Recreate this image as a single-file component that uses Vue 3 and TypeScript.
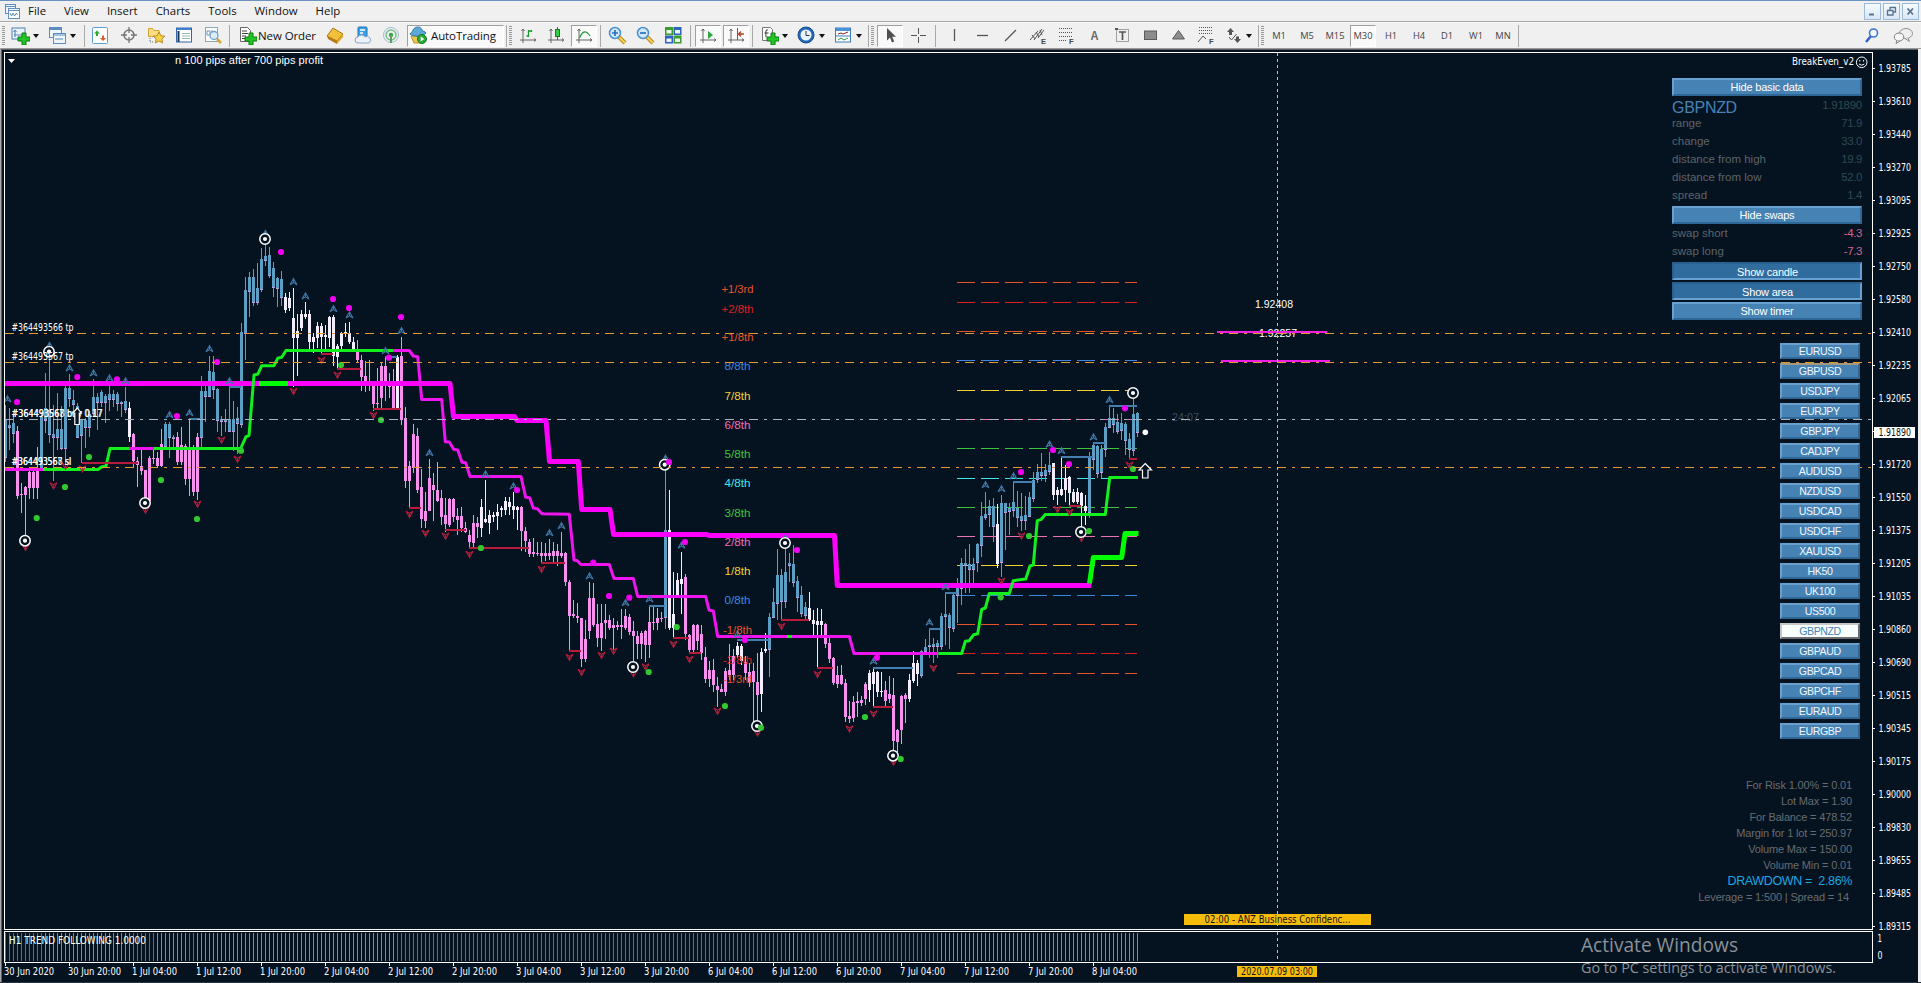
<script setup lang="ts">
interface Candle { x: number; high: number; top: number; bottom: number; low: number; tone: string }
type Pt = [number, number]

const FIRST_BAR = 5
const BAR_STEP = 4

/* Bars are stored as high,bodyTop,bodyBottom,low in thirds of a pixel below `base`; a letter switches the tone. */
const segments: { base: number; start: number; rows: string }[] = [
  { base: 220, start: 0, rows: `b 555,600,712,725 565,615,622,690 590,610,638,668 p 618,632,828,838 788,821,824,880 797,800,825,945
745,755,803,838 745,755,803,838 680,750,803,838 b 575,590,745,750 460,565,600,640 410,570,643,670 555,643,652,783 518,627,652,690
558,627,683,690 495,503,683,735 462,503,535,560 510,540,553,580 548,557,650,652 597,600,645,730 595,600,620,683 573,583,620,650
477,530,580,592 518,530,545,630 510,517,545,560 522,527,545,610 490,522,538,572 510,522,538,560 517,522,548,572 543,545,548,592
502,543,567,580 w 547,565,650,665 p 638,642,722,740 710,722,735,800 683,738,752,765 750,750,838,840 708,715,843,845 685,713,716,733
697,715,737,745 627,673,738,740 b 607,612,677,683 605,612,650,715 645,652,655,683 p 637,652,725,735 620,675,725,735 673,678,778,795
600,680,778,828 675,683,817,828 640,650,817,840 b 467,513,650,685 490,513,527,607 407,453,527,530 407,455,507,537 503,508,600,635
587,597,602,648 568,597,602,635 490,598,632,632 543,597,632,693 560,595,608,703 310,337,612,625 170,210,340,420 155,170,213,290
147,170,245,258 128,205,247,255 85,117,207,215 75,107,119,138 80,105,165,175 127,145,200,230 170,175,203,260 153,177,230,258
w 220,230,270,278 215,235,265,272 205,295,353,500 283,333,353,468 270,283,325,333 245,283,290,298 270,283,367,395 340,350,367,400
305,318,355,383 310,318,350,400 315,345,350,390 287,290,353,380 285,290,408,437 373,378,410,450 335,340,378,397 308,335,340,350
305,340,367,372 350,367,388,395 p 360,388,420,430 405,420,470,513 422,468,487,515 420,485,492,512 483,492,553,573 445,550,553,563
428,437,535,565 415,437,490,543 460,487,500,535 447,497,563,565 w 405,410,563,567 p 350,408,600,615` },
  { base: 260, start: 100, rows: `p 440,473,663,685 603,618,663,748 492,522,625,640 505,528,690,700 628,680,778,805 697,752,782,805
597,653,752,753 640,675,690,783 607,690,723,725 690,715,770,795 715,765,793,815 715,717,795,800 715,717,770,785 743,768,780,825
740,768,805,815 785,803,817,820 810,825,847,868 765,790,850,862 770,788,800,835 w 717,740,805,830 660,778,785,788 750,765,788,823
755,765,770,785 733,755,768,810 738,745,750,770 712,723,750,765 712,727,740,765 695,738,750,778 738,742,750,810 p 738,742,812,873
800,812,843,875 837,845,883,890 833,877,883,890 845,878,883,888 847,878,887,913 850,878,887,903 837,878,887,900 845,873,887,905
853,873,887,918 817,880,887,893 875,880,967,978` },
  { base: 440, start: 141, rows: `p 420,427,527,632 480,522,527,535 490,527,533,550 533,533,657,680 540,597,657,665 427,473,572,597
430,475,555,560 493,552,593,622 493,550,595,632 493,540,550,597 525,540,563,570 535,555,563,630 543,555,560,570 507,555,560,597
507,527,563,570 523,530,575,585 543,573,588,663 573,588,612,657 573,580,612,657 570,573,615,665 502,545,615,655 502,545,550,570
505,533,550,570 515,533,537,545 b 90,270,530,567 w 150,270,563,570 397,522,563,595 400,420,467,475 337,417,433,522
p 403,412,583,600 583,585,630,640 552,555,630,640 553,555,603,630 555,583,640,660 620,650,717,730 662,690,717,740 657,690,735,755
712,737,750,800 733,748,755,755 683,693,755,767 612,690,705,720 627,648,705,720 w 605,618,645,655 612,618,663,675
p 648,665,700,720 670,695,725,740 670,693,725,848 640,725,765,840 w 625,635,762,815 578,627,632,640 b 520,530,628,710 443,487,530,535
327,405,490,540 387,405,483,540 325,395,483,505 340,370,375,425 315,373,425,440 407,423,472,515 437,465,520,530 485,500,525,540
w 455,503,540,543 510,540,553,590 505,543,555,683 508,543,555,587 p 548,552,612,625 587,610,657,670 650,655,730,735 677,705,733,745
675,705,732,735 717,730,832,847 783,827,838,850 767,785,835,845 755,783,788,830 767,780,788,797 725,732,777,795
w 690,698,750,787 687,695,733,800 693,695,755,770 697,752,755,770 p 723,750,782,800 707,763,778,790 713,765,903,935 868,870,907,935
765,767,870,912 760,765,777,850 w 703,720,777,785 632,670,723,730 660,670,703,737 b 630,633,705,713 597,620,632,640 570,614,617,655
595,613,617,668 600,610,617,655 520,528,617,630 460,522,527,615 518,525,560,627 460,465,563,575 415,440,465,550 353,368,443,495
327,370,375,460 313,373,387,460 355,373,388,433 310,312,367,395 187,228,315,350 155,223,230,240 180,198,222,262 173,198,257,307
w 193,253,373,383 b 165,188,367,410 188,190,215,330 188,205,213,285 127,185,210,232 153,205,230,262 158,228,240,272 167,225,240,270
155,170,227,230 97,120,173,185 73,97,117,130 40,97,105,122 73,90,105,125 35,75,92,105 w 68,70,165,180 140,150,165,195 50,148,165,167
75,113,150,187 108,112,158,197 148,155,187,190 143,155,187,193 155,160,197,260 165,197,213,255 b 37,50,215,235` },
  { base: 260, start: 272, rows: `b 547,555,597,630 555,557,640,655 555,567,637,653 490,500,567,590 440,473,500,503 445,475,492,520
463,487,513,523 460,490,510,540 487,492,540,585 520,537,567,600 415,462,570,587 457,460,517,530` },
]

const toneColor: Record<string, string> = { b: '#5c9fc4', p: '#f890f0', w: '#f2eefc' }

const candles: Candle[] = segments.flatMap(({ base, start, rows }) => {
  const out: Candle[] = []
  let tone = 'b'
  for (const cell of rows.split(/\s+/)) {
    if (cell.length === 1) { tone = cell; continue }
    const [high, top, bottom, low] = cell.split(',').map(v => Math.round(base + Number(v) / 3))
    out.push({ x: FIRST_BAR + BAR_STEP * (start + out.length), high, top, bottom: Math.max(bottom, top + 1), low, tone })
  }
  return out
})

const slowLine = [
  { color: '#ff00ff', pts: '5,383.5 450,383.5 453.5,416.5 514.5,416.5 517,420.5 546,420.5 549.5,461.5 578.3,461.5 581.7,509.5 610,509.5 613.5,534.5 707,534.5 709,535.5 834.5,535.5 837.3,585.5 1091,585.5' },
  { color: '#00ff00', pts: '259,383.5 288,383.5' },
  { color: '#00ff00', pts: '1089.5,583.5 1093.3,557.5 1121.7,557.5 1125,533.5 1138.5,533.5' },
]
const fastLine = [
  { color: '#f014f0', pts: '5,469.5 43,469.5' },
  { color: '#14f01e', pts: '43,469.5 98,469.5 101.5,467 106,466 110,448.5 240.7,448.5 246,436.7 249,435.7 254,375 258,374 261.7,365.7 274,365.7 277.7,358.3 281.7,357.3 286,350.5 393,350.5' },
  { color: '#f014f0', pts: '129,448.5 154,448.5' },
  { color: '#f014f0', pts: '393,350.5 409.3,350.5 413.3,356 417.7,356.7 421.7,399.5 441.7,399.5 445.3,441.7 449.3,442 453.7,449.3 457.7,450 462,462.3 465.7,462.7 470,476.5 521,476.5 525.7,497.3 529.7,497.7 533.3,508 537.3,508.7 542,513.7 569.3,514.3 574,560 577.3,560.7 581,564.5 609.3,564.5 614,578.5 633.3,578.5 637.7,596.5 705.7,596.5 709,610 713.3,611 717.7,636.5 849.3,636.5 854,653.5 938.3,653.5' },
  { color: '#14f01e', pts: '787,636.5 792,636.5' },
  { color: '#14f01e', pts: '938.3,653.5 961.7,653.5 965.3,641.3 969.3,640.7 973.7,634.7 977.7,633.7 981.7,609.3 985.3,608 989.3,593.5 1009.3,593.5 1013.3,580.7 1025.7,579 1030,566 1033.3,565 1037.3,520.7 1041.3,519.3 1045.3,514.5 1105.3,514.5 1109.7,477.5 1138,477.5' },
]

const pts = (s: string): Pt[] => s.split(' ').map(p => p.split(',').map(Number) as Pt)

const rings = pts('49,351.7 25,540.7 145,503 265,239 664.7,464.7 785,543 633,667 757,726 893,755.7 1133,393 1081,532')
const magentaDots = pts('17,402 77.3,377 117,379.3 217,362 177,416 281,252 333,299 349,308 401,317 389,357.7 517,490 593.3,562.7 669,462 685,542 609,596 629.3,597.7 797,550 745,640 877,657.7 1021,472 1053,450 1069,464 1125,408.3')
const greenDots = pts('36.7,518 65,487 89,457 161,480 197,519 241,450.7 341,365 381,420 481,548 676.7,627 648.7,672 725,706 761,727.7 865,717 900.7,759 1029,536 1089,531 1133,469 1000.7,597.3')
const upFractals = pts('7,399 49,345.5 69,368 93,373 109,378 125,381 169,414.7 189,412.7 209,348.7 229,381 265,233.5 293,281.7 305,296 333,308.7 349,315 401,330.7 385,350.7 429,452.7 485,474 513,486 549,532.7 561,525.7 589,576 649,599 665,458.3 681,545.3 785,537.7 625,602.7 737,634 873,661.3 929,622.3 945,586.7 985,484.7 1001,488.7 1013,476 1049,444.3 1061,450.7 1093,437 1109,399.7')
const downFractals = pts('65,466 82,468.7 53,485.7 25,547.3 145,510 197,504 221,440 237,459 293,391.3 321,360.3 337,375 373,415.3 409,514.3 425,533.3 445,536 469,554.3 541,569.3 569,657.3 581,672.3 601,655.3 613,651 633,673.7 645,666.7 673,644.3 689,659.3 717,711 757,732.7 781,626.3 817,674.3 849,728.7 873,713.7 893,762 933,668.3 1021,535.7 1001,581 1057,509.3 1069,512.3 1081,538.3 1129,465')

const levels = (s: string) => s.split(' ').map(r => { const [x1, x2, y] = r.split(',').map(Number); return { x1, x2, y } })
const supports = levels('82,138,463 321,333,354 337,361,369 373,401,409 409,421,508 445,466,530 469,529,548 541,565,563 569,581,651 673,689,638 689,701,653 781,809,620 817,833,668 873,893,707 1069,1081,506 1129,1137,459')
const resistances = levels('189,201,419 229,241,387 385,397,357 737,769,640 649,665,606 873,913,668 929,941,629 945,957,593 1061,1093,457 1013,1033,482 1093,1105,443 1109,1137,406')

const murrey = [
  { t: '+1/3rd', c: '#e8542a', y: 282, ty: 289.3 }, { t: '+2/8th', c: '#e01f1f', y: 302, ty: 309.3 },
  { t: '+1/8th', c: '#e8542a', y: 331, ty: 338 }, { t: '8/8th', c: '#3a86e0', y: 360, ty: 367 },
  { t: '7/8th', c: '#f0d232', y: 390, ty: 396.3 }, { t: '6/8th', c: '#ee6fb4', y: 419, ty: 426 },
  { t: '5/8th', c: '#3cc43c', y: 448, ty: 455 }, { t: '4/8th', c: '#3ce8ec', y: 478, ty: 484 },
  { t: '3/8th', c: '#3cc43c', y: 507, ty: 514 }, { t: '2/8th', c: '#ee6fb4', y: 536, ty: 543 },
  { t: '1/8th', c: '#f0d232', y: 565, ty: 572 }, { t: '0/8th', c: '#3a86e0', y: 595, ty: 601 },
  { t: '-1/8th', c: '#e8542a', y: 624, ty: 631 }, { t: '-2/8th', c: '#e01f1f', y: 653, ty: 660.3 },
  { t: '-1/3rd', c: '#e8542a', y: 673, ty: 679.3 },
]

const orders = [
  { y: 333, c: '#e39a34' }, { y: 362, c: '#e39a34' }, { y: 419, c: '#a9b4bd' }, { y: 467, c: '#e39a34' },
]
const orderLabels = [
  { y: 327.7, t: '#364493566 tp', w: 62 }, { y: 356.7, t: '#364493567 tp', w: 62 },
  { y: 413.7, t: '#364493567 buy 0.17', w: 90.5 }, { y: 413.7, t: '#364493568 buy 0.17', w: 91.5 },
  { y: 461.3, t: '#364493567 sl', w: 59.5 }, { y: 461.3, t: '#364493568 sl', w: 60 },
]

const prices = ['1.93785', '1.93610', '1.93440', '1.93270', '1.93095', '1.92925', '1.92750', '1.92580', '1.92410', '1.92235', '1.92065', '1.91890', '1.91720', '1.91550', '1.91375', '1.91205', '1.91035', '1.90860', '1.90690', '1.90515', '1.90345', '1.90175', '1.90000', '1.89830', '1.89655', '1.89485', '1.89315']
const priceY = (i: number) => 68 + 33 * i

const times = ['30 Jun 2020', '30 Jun 20:00', ...['1', '2', '3', '6', '7', '8'].flatMap(d => ['04:00', '12:00', '20:00'].map(h => `${d} Jul ${h}`))].slice(0, 18)

const downRanges = [[0, 9], [32, 37], [46, 47], [98, 195], [198, 233]]
const trend = Array.from({ length: 284 }, (_, i) => ({
  x: FIRST_BAR + BAR_STEP * i,
  c: downRanges.some(([a, b]) => i >= a && i <= b) ? '#c828cc' : '#2cc83c',
}))

const basic = [['range', '71.9'], ['change', '33.0'], ['distance from high', '19.9'], ['distance from low', '52.0'], ['spread', '1.4']]
const swaps = [['swap short', '-4.3'], ['swap long', '-7.3']]
const symbols = ['EURUSD', 'GBPUSD', 'USDJPY', 'EURJPY', 'GBPJPY', 'CADJPY', 'AUDUSD', 'NZDUSD', 'USDCAD', 'USDCHF', 'XAUUSD', 'HK50', 'UK100', 'US500', 'GBPNZD', 'GBPAUD', 'GBPCAD', 'GBPCHF', 'EURAUD', 'EURGBP']
const account = ['For Risk 1.00% = 0.01', 'Lot Max = 1.90', 'For Balance = 478.52', 'Margin for 1 lot = 250.97', 'Volume Max = 150.00', 'Volume Min = 0.01']

const menu = ['File', 'View', 'Insert', 'Charts', 'Tools', 'Window', 'Help']

const axes = '<path d="M4 3v14M1 14h16M2.500 5L4 3l1.500 2M15 12.500L17 14l-2 1.500" fill="none" stroke="#666"/>'
const plus = '<path d="M11 7h4v4h4v4h-4v4h-4v-4H7v-4h4z" fill="#25c425" stroke="#0c7a12"/>'
const lens = '<path d="M11 11l6 6" stroke="#b98a1c" stroke-width="4"/><path d="M11 11l6 6" stroke="#f3d35c" stroke-width="2"/><circle cx="7" cy="7" r="5.500" fill="#cfe9fb" stroke="#4a8fcf" stroke-width="1.500"/>'
const icons: Record<string, string> = {
  newchart: '<rect x="1" y="2" width="13" height="11" fill="#eaf3fb" stroke="#4b82b5"/><path d="M4 4v7M2.500 6L4 4l1.500 2M3 9h8" stroke="#4b82b5" fill="none"/>' + plus,
  profiles: '<rect x="1.500" y="1.500" width="12" height="10" fill="#eef5fb" stroke="#5a8dbd"/><path d="M1.500 3h12" stroke="#5a8dbd" stroke-width="2"/><rect x="5.500" y="7.500" width="12" height="10" fill="#eef5fb" stroke="#5a8dbd"/><path d="M5.500 9h12M7 13h8" stroke="#5a8dbd"/>',
  market: '<rect x="1.500" y="1.500" width="15" height="16" rx="1" fill="#fff" stroke="#5b9ed2"/><path d="M3 7.500L6 4.500 9 7.500H7V10H5V7.500z" fill="#28a828"/><path d="M9 12h2V9.500h2V12h2L12 15z" fill="#e05a2a"/>',
  target: '<circle cx="9" cy="9" r="5" fill="none" stroke="#777" stroke-width="1.500"/><path d="M9 1v6M9 11v6M1 9h6M11 9h6" stroke="#777" stroke-width="1.300"/>',
  navigator: '<path d="M1.500 2.500h4l1.500 2h5v6h-10.500z" fill="#fbdf82" stroke="#d0a030"/><path d="M12 6l1.800 3.700 4 .5-3 2.700.8 4-3.600-2-3.600 2 .8-4-3-2.700 4-.5z" fill="#f8d14a" stroke="#b98a1c"/><path d="M3 12v4h3" stroke="#666" stroke-dasharray="1 1" fill="none"/>',
  data: '<rect x="1.500" y="2" width="15" height="14" fill="#fff" stroke="#2f68b0"/><path d="M2 3h14" stroke="#3f7fd0" stroke-width="2"/><path d="M3.500 5v11" stroke="#234" stroke-width="2"/><path d="M7 7.500h8M7 10h8M7 12.500h8" stroke="#9bb"/>',
  tester: '<rect x="1.500" y="1.500" width="12" height="14" fill="#fff" stroke="#8aa"/><path d="M3 5h3v4H3zM8 4v6" stroke="#6b93b8" fill="none"/><path d="M13 13l4 4" stroke="#d5a52c" stroke-width="2.500"/><circle cx="10" cy="9.500" r="4" fill="#dbeefa" stroke="#6fa4cf" stroke-width="1.300"/>',
  order: '<path d="M2.500 1.500h7l3 3v11h-10z" fill="#fff" stroke="#666"/><path d="M4 5h5M4 7.500h6M4 10h4M4 12.500h3" stroke="#444"/>' + plus,
  diamond: '<path d="M1 10L7 2l10 6-6 7z" fill="#f2c13c" stroke="#a87412"/><path d="M1 10l10 5v3L2 13z" fill="#b87a14"/><path d="M11 15l6-7v3l-6 7z" fill="#e2a52b"/>',
  vps: '<rect x="4" y="1" width="9" height="11" rx="1" fill="#38a1e6" stroke="#1b74bb"/><path d="M6 4h5M6 7h3" stroke="#fff" stroke-width="1.500"/><path d="M4 17a3 3 0 0 1 0-6 4 4 0 0 1 7 0 3 3 0 0 1 4 6z" fill="#eaf1f8" stroke="#8ba6c0"/>',
  signal: '<circle cx="9" cy="9" r="7.500" fill="#eef4f6" stroke="#9fbfd0"/><circle cx="9" cy="9" r="5" fill="none" stroke="#7dbb88" stroke-width="1.500"/><circle cx="9" cy="9" r="2.200" fill="#35a33e"/><path d="M9 9v8" stroke="#5c9f60" stroke-width="2"/>',
  auto: '<path d="M2 10h13l-3 7H5z" fill="#f0c648" stroke="#b9902a"/><path d="M1 8c1-2 3-2 3-4 2-4 8-4 9 0 1 2 3 1 4 3-4 4-12 4-16 1z" fill="#5ca9d8" stroke="#2e75a8"/><circle cx="13" cy="13" r="4.500" fill="#27ae36" stroke="#107a1d"/><path d="M11.700 10.500l3.500 2.500-3.500 2.500z" fill="#fff"/>',
  bars: axes + '<path d="M9.500 4v7M7.500 10h2M9.500 5h3M12.500 4v2" stroke="#1b9a2b" stroke-width="1.300" fill="none"/>',
  candles: axes + '<path d="M10.500 1v13" stroke="#177a22"/><rect x="8.500" y="3.500" width="4" height="7" fill="#2fd046" stroke="#177a22"/>',
  line: axes + '<path d="M4.500 12Q9 1 15 10" stroke="#2c9c40" stroke-width="1.300" fill="none"/>',
  zoomin: lens + '<path d="M4 7h6M7 4v6" stroke="#2c6fc0" stroke-width="1.700"/>',
  zoomout: lens + '<path d="M4 7h6" stroke="#2c6fc0" stroke-width="1.700"/>',
  tile: '<rect x="1" y="1" width="8" height="8" fill="#3a9c2c"/><rect x="9.500" y="1" width="8" height="8" fill="#2c62c4"/><rect x="1" y="9.500" width="8" height="8" fill="#2c62c4"/><rect x="9.500" y="9.500" width="8" height="8" fill="#3a9c2c"/><path d="M2.500 4h5v3.500h-5zM11 4h5v3.500h-5zM2.500 12.500h5V16h-5zM11 12.500h5V16h-5z" fill="#eef6ee"/>',
  scroll: axes + '<path d="M9 5l5 4-5 4z" fill="#2aa83a"/>',
  shift: axes + '<path d="M10.500 2v12" stroke="#2b6aa8"/><path d="M17 8h-5M14 5.500L11.500 8l2.500 2.500" stroke="#b5401e" stroke-width="1.300" fill="none"/>',
  indicators: '<path d="M2.500 1.500h8l2 2v11h-10z" fill="#fff" stroke="#777"/><path d="M8 4c-3-1-2 3-2 7M4.500 7h4" stroke="#333" fill="none"/>' + plus,
  clock: '<circle cx="9" cy="9" r="8" fill="#2568b8" stroke="#154a8c"/><circle cx="9" cy="9" r="5.500" fill="#e9f4fd"/><path d="M9 5v4.500h3.500" stroke="#333" fill="none"/>',
  template: '<rect x="1.500" y="2" width="15" height="14" fill="#fff" stroke="#3e7dbd"/><path d="M2 3.500h14" stroke="#4b92d6" stroke-width="3"/><path d="M4 8l3-1 2 1 5-2" stroke="#8a2222" fill="none"/><path d="M2 10h14" stroke="#3e7dbd"/><path d="M4 14l3-2 3 2 4-2" stroke="#2a9a3a" fill="none"/>',
  cursor: '<path d="M6 2v12.500l3-3 2 5 2.200-1-2-4.800H15z" fill="#505050"/>',
  cross: '<path d="M9.500 2v6M9.500 11v6M2 9.500h6M11 9.500h6" stroke="#555"/>',
  vline: '<path d="M9.500 3v12" stroke="#555" stroke-width="1.300"/>',
  hline: '<path d="M4 9.500h11" stroke="#555" stroke-width="1.300"/>',
  tline: '<path d="M4 15L15 4" stroke="#555" stroke-width="1.200"/>',
  channel: '<path d="M1 14L9 5M5 14l8-11M9 12l6-8M3 9l3 4M7 6l3 5M11 4l2 5" stroke="#555" fill="none"/><text x="12" y="18" font-size="7.500" font-weight="700" fill="#444" font-family="Liberation Sans">E</text>',
  fibo: '<path d="M2 2.500h14M2 6.500h14M2 10.500h14M2 14.500h8" stroke="#555" stroke-dasharray="1 1"/><text x="12" y="18" font-size="7.500" font-weight="700" fill="#444" font-family="Liberation Sans">F</text>',
  text: '<text x="5.500" y="14" font-size="12.500" font-weight="700" textLength="8" lengthAdjust="spacingAndGlyphs" fill="#666" font-family="Liberation Sans">A</text>',
  label: '<rect x="3.500" y="3.500" width="12" height="12" fill="none" stroke="#555" stroke-dasharray="1 1"/><path d="M6 6h7M9.500 6v8" stroke="#555" stroke-width="1.700"/><path d="M2 2h3v2H2z" fill="#555"/>',
  rect: '<rect x="3.500" y="5" width="12" height="8.500" fill="#8c8c8c" stroke="#5a5a5a"/>',
  tri: '<path d="M9.500 4.500L15.500 13h-12z" fill="#8c8c8c" stroke="#5a5a5a"/>',
  fiboex: '<path d="M2 1.500h14M2 4.500h14M2 7.500h14" stroke="#555" stroke-dasharray="1 1"/><path d="M1 16l5-6 3 3" stroke="#555" fill="none"/><text x="12" y="18" font-size="7.500" font-weight="700" fill="#444" font-family="Liberation Sans">F</text>',
  arrows: '<path d="M5.500 2l3.500 4H7v3H4V6H2zM12.500 17L9 13h2v-2.500h3V13h2z" fill="#555"/><path d="M4 11l2.500 3 5-6" stroke="#555" fill="none"/>',
}

interface Tool { kind: 'icon' | 'drop' | 'sep' | 'grip' | 'text' | 'push' | 'tf'; at: number; w: number; name?: string; on?: boolean }
const icon = (name: string, at: number, on = false): Tool => ({ kind: 'icon', name, at, w: 26, on })
const drop = (at: number): Tool => ({ kind: 'drop', at, w: 6 })
const sep = (at: number): Tool => ({ kind: 'sep', at, w: 1 })
const grip = (at: number): Tool => ({ kind: 'grip', at, w: 3 })
const tf = (name: string, at: number, on = false): Tool => ({ kind: 'tf', name, at, w: 26, on })

const toolData: Tool[] = [
  grip(3.5), icon('newchart', 20), drop(36), icon('profiles', 57), drop(73), sep(84.5), icon('market', 100), icon('target', 129),
  icon('navigator', 156), icon('data', 184), icon('tester', 213), sep(229.5), icon('order', 247), { kind: 'text', name: 'New Order', at: 287, w: 58 },
  icon('diamond', 335), icon('vps', 363), icon('signal', 391), { kind: 'push', name: 'AutoTrading', at: 455.5, w: 97 }, sep(506.5), grip(510.5),
  icon('bars', 528), icon('candles', 556), icon('line', 584, true), sep(600.5), icon('zoomin', 617), icon('zoomout', 645), icon('tile', 673),
  sep(690.5), icon('scroll', 708, true), icon('shift', 736, true), sep(752.5), icon('indicators', 769), drop(785), icon('clock', 806), drop(822),
  icon('template', 843), drop(859), sep(868.5), grip(872.5), icon('cursor', 890, true), icon('cross', 918), sep(935.5), icon('vline', 954),
  icon('hline', 982), icon('tline', 1010), icon('channel', 1038), icon('fibo', 1066), icon('text', 1094), icon('label', 1122), icon('rect', 1150),
  icon('tri', 1178), icon('fiboex', 1206), icon('arrows', 1234), drop(1249), sep(1258.5), grip(1262.5),
  tf('M1', 1279), tf('M5', 1307), tf('M15', 1335), tf('M30', 1363, true), tf('H1', 1391), tf('H4', 1419), tf('D1', 1447), tf('W1', 1476), tf('MN', 1503), sep(1518.5),
]
let edge = 0
const tools = toolData.map(t => {
  const left = t.at - t.w / 2
  const gap = left - edge
  edge = left + t.w
  return { ...t, style: { width: `${t.w}px`, marginLeft: `${gap}px` } }
})
</script>

<template>
  <div class="app">
    <header class="menubar">
      <svg class="logo" width="17" height="17" viewBox="0 0 17 17">
        <rect x="1.500" y="1.500" width="10" height="9" fill="#eef4fa" stroke="#5f8fbd" /><path d="M1.500 3.500h10" stroke="#5f8fbd" />
        <rect x="4.500" y="5.500" width="11" height="10" fill="#fff" stroke="#5f8fbd" /><path d="M4.500 7.500h11M6 10l1.500 3 1.500-3 1.500 3 2-3 1 2" fill="none" stroke="#5f8fbd" />
      </svg>
      <nav><span v-for="m in menu" :key="m">{{ m }}</span></nav>
      <div class="mdi">
        <i><svg width="11" height="11"><path d="M2 8.500h5" stroke="#56738f" stroke-width="2" /></svg></i>
        <i><svg width="11" height="11"><path d="M4 4V1.500h5.500V6H7.500M1.500 4.500h5.500V9H1.500z" fill="none" stroke="#56738f" stroke-width="1.300" /></svg></i>
        <i><svg width="11" height="11"><path d="M2.500 2.500l5.500 6M8 2.500l-5.500 6" stroke="#56738f" stroke-width="1.800" /></svg></i>
      </div>
    </header>

    <div class="toolbar">
      <div v-for="(t, i) in tools" :key="i" :class="['tool', t.kind, { on: t.on }]" :style="t.style">
        <svg v-if="t.kind === 'icon'" width="19" height="19" viewBox="0 0 19 19" v-html="icons[t.name!]" />
        <template v-else-if="t.kind === 'push'">
          <svg width="19" height="19" viewBox="0 0 19 19" v-html="icons.auto" /><span>{{ t.name }}</span>
        </template>
        <span v-else-if="t.name">{{ t.name }}</span>
      </div>
      <div class="right-tools">
        <svg width="18" height="18" viewBox="0 0 18 18"><path d="M3 15l5-6" stroke="#2f62c8" stroke-width="2.500" /><circle cx="10.500" cy="6" r="4" fill="#f6faff" stroke="#3b74d8" stroke-width="1.600" /></svg>
        <svg width="22" height="18" viewBox="0 0 22 18"><ellipse cx="14" cy="6.500" rx="6.500" ry="5" fill="#eee" stroke="#909090" /><path d="M16 11l1.500 3.500L13 11.500" fill="#eee" stroke="#909090" /><ellipse cx="7" cy="10" rx="4.800" ry="4" fill="#f6f6f6" stroke="#808080" /><path d="M5 13.500l-1 3 4-2.500" fill="#f6f6f6" stroke="#808080" /></svg>
      </div>
    </div>

    <main class="chart">
      <svg class="plot" width="1921" height="934" viewBox="0 49 1921 934">
        <g shape-rendering="crispEdges">
          <rect x="0" y="49" width="1921" height="934" fill="#051321" />
          <rect x="0" y="49" width="1921" height="1" fill="#5a5f66" />
          <rect x="0" y="49" width="1" height="934" fill="#a8a8a8" />
          <rect x="1" y="50" width="1" height="933" fill="#5e6268" />
          <rect x="1918" y="49" width="3" height="934" fill="#eef0f2" />
          <rect x="0" y="982" width="1921" height="1" fill="#27333f" />
        </g>

        <g shape-rendering="crispEdges">
          <line v-for="m in murrey" :key="m.t" x1="957" x2="1137" :y1="m.y + .5" :y2="m.y + .5" :stroke="m.c" stroke-dasharray="18 6" />
        </g>

        <g shape-rendering="crispEdges">
          <template v-for="c in candles" :key="c.x">
            <rect :x="c.x" :y="c.high" width="1" :height="Math.max(c.low - c.high, 1)" :fill="toneColor[c.tone]" />
            <rect :x="c.x - 1" :y="c.top" width="3" :height="c.bottom - c.top" :fill="toneColor[c.tone]" />
            <rect v-if="c.tone === 'b'" :x="c.x - 1" :y="c.bottom" width="3" height="1" fill="#c79be0" />
          </template>
        </g>

        <polyline v-for="(l, i) in slowLine" :key="'s' + i" :points="l.pts" fill="none" :stroke="l.color" stroke-width="5" stroke-linejoin="round" />
        <polyline v-for="(l, i) in fastLine" :key="'f' + i" :points="l.pts" fill="none" :stroke="l.color" stroke-width="3" stroke-linejoin="round" />

        <g shape-rendering="crispEdges">
          <rect v-for="(s, i) in supports" :key="'r' + i" :x="s.x1" :y="s.y - 1" :width="s.x2 - s.x1" height="2" fill="#b81c3c" />
          <rect v-for="(s, i) in resistances" :key="'b' + i" :x="s.x1" :y="s.y - 1" :width="s.x2 - s.x1" height="2" fill="#427fb0" />
        </g>

        <path v-for="(p, i) in upFractals" :key="'u' + i" :transform="`translate(${p[0] + .5} ${p[1]})`" d="M-3.500 3L0-3.200L3.500 3L0 .8ZM0-3V1" fill="none" stroke="#3f76a5" stroke-width="1.100" />
        <path v-for="(p, i) in downFractals" :key="'d' + i" :transform="`translate(${p[0] + .5} ${p[1]})`" d="M-3.500-3L0 3.200L3.500-3L0-.8ZM0 3V-1" fill="none" stroke="#b81c3c" stroke-width="1.100" />
        <g v-for="(p, i) in rings" :key="'o' + i" :transform="`translate(${p[0]} ${p[1]})`">
          <circle r="5.200" fill="#051321" stroke="#fff" stroke-width="1.500" /><circle r="2.100" fill="#fff" />
        </g>
        <circle v-for="(p, i) in magentaDots" :key="'m' + i" :cx="p[0]" :cy="p[1]" r="3.100" fill="#f000f0" />
        <circle v-for="(p, i) in greenDots" :key="'g' + i" :cx="p[0]" :cy="p[1]" r="3.100" fill="#32c832" />

        <g class="arial" text-anchor="middle">
          <text v-for="m in murrey" :key="m.t" x="737.500" :y="m.ty + 3.400" :fill="m.c" :textLength="m.t.length > 5 ? (m.t[0] === '+' ? 32 : 29) : 26" lengthAdjust="spacingAndGlyphs" font-size="11.500">{{ m.t }}</text>
          <text x="1274" y="307.800" fill="#fff" textLength="38" lengthAdjust="spacingAndGlyphs" font-size="11">1.92408</text>
          <text x="1278" y="336.800" fill="#fff" textLength="38" lengthAdjust="spacingAndGlyphs" font-size="11">1.92257</text>
          <text x="1185.500" y="420.600" fill="#3b4d5a" textLength="27" lengthAdjust="spacingAndGlyphs" font-size="11.500">24:07</text>
        </g>

        <g class="tahoma" fill="#fff">
          <text v-for="(o, i) in orderLabels" :key="i" x="11.500" :y="o.y + 3.300" :textLength="o.w" lengthAdjust="spacingAndGlyphs" font-size="10">{{ o.t }}</text>
        </g>

        <rect x="1217" y="331" width="110" height="2" fill="#f01ee0" /><rect x="1221" y="360" width="109" height="2" fill="#f01ee0" />
        <g shape-rendering="crispEdges">
          <line v-for="o in orders" :key="o.y" x1="5" x2="1872" :y1="o.y + .5" :y2="o.y + .5" :stroke="o.c" stroke-dasharray="9 6 3 6" />
        </g>

        <g fill="#051321" stroke="#fff" stroke-width="1.200">
          <path d="M1145.200 463.500l6.300 6.500h-3.500v8h-5.500v-8h-3.500z" />
          <path d="M77.300 408l4 5h-2v11.500h-4.500V413h-2z" />
        </g>
        <circle cx="1145.300" cy="432.300" r="2.800" fill="#fff" />

        <g shape-rendering="crispEdges">
          <rect v-for="t in trend" :key="t.x" :x="t.x" y="933" width="1" height="28" :fill="t.c" />
          <rect x="1184" y="914" width="187" height="11" fill="#f5bd0a" />
          <line x1="1277.500" x2="1277.500" y1="53" y2="929" stroke="#e8c33c" stroke-dasharray="3 3" />
          <line x1="1277.500" x2="1277.500" y1="932" y2="961" stroke="#e8c33c" stroke-dasharray="3 3" />
          <path d="M4.500 52.500H1872.500V929.500H4.500ZM4.500 931.500H1872.500V962.500H4.500Z" fill="none" stroke="#fff" />
          <rect x="1237" y="966" width="80" height="11" fill="#f5bd0a" />
          <rect v-for="(p, i) in prices" :key="p" x="1873" :y="priceY(i)" width="2" height="1" fill="#fff" />
          <rect x="1874" y="427" width="41" height="11" fill="#fff" />
          <rect v-for="(t, i) in times" :key="t" :x="5 + 64 * i" y="963" width="1" height="3" fill="#fff" />
        </g>

        <g class="tahoma" font-size="10">
          <text v-for="(p, i) in prices" :key="p" x="1878.500" :y="priceY(i) + (p === '1.91890' ? 5 : 4.300)" textLength="32.500" lengthAdjust="spacingAndGlyphs" :fill="p === '1.91890' ? '#111' : '#fff'">{{ p }}</text>
          <text x="1877.500" y="942.300" fill="#fff" textLength="4.500" lengthAdjust="spacingAndGlyphs">1</text>
          <text x="1877.500" y="959.300" fill="#fff" textLength="5" lengthAdjust="spacingAndGlyphs">0</text>
          <text v-for="(t, i) in times" :key="t" :x="4 + 64 * i" y="974.500" fill="#fff" :textLength="i === 0 ? 50 : i === 1 ? 53 : 45" lengthAdjust="spacingAndGlyphs">{{ t }}</text>
          <text x="9" y="944" fill="#fff" textLength="137" lengthAdjust="spacingAndGlyphs">H1 TREND FOLLOWING 1.0000</text>
          <text x="1204.500" y="922.800" fill="#111" textLength="146" lengthAdjust="spacingAndGlyphs">02:00 - ANZ Business Confidenc...</text>
          <text x="1241" y="975" fill="#111" textLength="72" lengthAdjust="spacingAndGlyphs">2020.07.09 03:00</text>
          <text x="1792" y="65.300" fill="#fff" textLength="62" lengthAdjust="spacingAndGlyphs">BreakEven_v2</text>
        </g>
        <text class="arial" x="175" y="64.300" fill="#fff" font-size="10.500" textLength="148" lengthAdjust="spacingAndGlyphs">n 100 pips after 700 pips profit</text>
        <path d="M8 59h7l-3.500 4z" fill="#fff" />
        <g fill="none" stroke="#fff"><circle cx="1861.700" cy="62.300" r="5.300" /><path d="M1859 64q2.700 2.500 5.400 0M1859.800 60v1.500M1863.600 60v1.500" /></g>

        <g class="segoe" fill="#8b9197">
          <text x="1581" y="952.300" font-size="20" textLength="157" lengthAdjust="spacingAndGlyphs">Activate Windows</text>
          <text x="1581" y="972.500" font-size="14" textLength="255" lengthAdjust="spacingAndGlyphs">Go to PC settings to activate Windows.</text>
        </g>
      </svg>

      <aside class="info">
        <div class="btn">Hide basic data</div>
        <div class="head"><b>GBPNZD</b><span>1.91890</span></div>
        <div v-for="r in basic" :key="r[0]" class="row"><span>{{ r[0] }}</span><em>{{ r[1] }}</em></div>
        <div class="btn swap-btn">Hide swaps</div>
        <div v-for="r in swaps" :key="r[0]" class="row neg"><span>{{ r[0] }}</span><em>{{ r[1] }}</em></div>
        <div class="stack">
          <div class="btn pressed">Show candle</div>
          <div class="btn pressed">Show area</div>
          <div class="btn">Show timer</div>
        </div>
      </aside>

      <div class="symbols">
        <div v-for="s in symbols" :key="s" :class="['btn', { current: s === 'GBPNZD', lined: s === 'GBPUSD' }]">{{ s }}</div>
      </div>

      <div class="account">
        <div v-for="a in account" :key="a">{{ a }}</div>
        <div class="drawdown">DRAWDOWN =&nbsp; 2.86%</div>
        <div class="leverage">Leverage = 1:500 | Spread = 14</div>
      </div>
    </main>
  </div>
</template>

<style>
html, body { margin: 0; overflow: hidden; background: #f0f0f0; }
</style>

<style scoped>
.app { width: 1921px; height: 983px; display: flex; flex-direction: column; overflow: hidden; background: #f0f0f0; font-family: "Open Sans", "Noto Sans", sans-serif; color: #111; }
.menubar { box-sizing: border-box; height: 22px; flex: none; display: flex; align-items: center; border-top: 1px solid #6b93c1; border-bottom: 1px solid #a5a5a5; padding: 0 2px 0 4px; }
.logo { flex: none; width: 17px; }
.menubar nav { display: flex; gap: 18px; margin-left: 7px; font-size: 11.4px; line-height: 18px; flex: 1; }
.mdi { display: flex; gap: 2px; }
.mdi i { box-sizing: border-box; width: 17px; height: 17px; border: 1px solid #9db9d8; background: linear-gradient(#f7fbff, #d8e7f6); display: flex; align-items: center; justify-content: center; }
.toolbar { height: 27px; flex: none; display: flex; align-items: center; box-sizing: border-box; border-bottom: 1px solid #9a9a9a; border-top: 1px solid #fafafa; }
.tool { box-sizing: border-box; height: 22px; flex: none; display: flex; align-items: center; justify-content: center; font-size: 11.5px; white-space: nowrap; }
.tool svg { flex: none; }
.on, .push { background: #fafafa; border: 1px solid; border-color: #a0a0a0 #fff #fff #a0a0a0; }
.sep { background: #a8a8a8; }
.grip { background: repeating-linear-gradient(#9a9a9a 0 1px, #f0f0f0 1px 2px); height: 20px; }
.drop { height: 0; border: 3px solid transparent; border-top: 4px solid #111; border-bottom: 0; }
.tf { font-size: 9.3px; color: #444; }
.text span { letter-spacing: -.1px; }
.push { gap: 3px; justify-content: flex-start; padding-left: 1px; letter-spacing: -.1px; }
.right-tools { margin-left: auto; padding-right: 7px; display: flex; align-items: center; gap: 11px; }
.chart { position: relative; height: 934px; flex: none; }
.plot { display: block; }
.arial { font-family: "Liberation Sans", Arial, sans-serif; }
.tahoma { font-family: "DejaVu Sans Condensed", "DejaVu Sans", Tahoma, sans-serif; }
.segoe { font-family: "Open Sans", sans-serif; }
.info, .symbols, .account { position: absolute; font-family: "Liberation Sans", Arial, sans-serif; }
.info { left: 1672px; top: 29px; width: 190px; font-size: 11.5px; color: #5f6367; }
.btn { box-sizing: border-box; height: 18px; display: flex; align-items: center; justify-content: center; background: #4682b4; color: #fff; border: 2px solid; border-color: #68a0d2 #2e6696 #2e6696 #68a0d2; font-size: 11px; letter-spacing: -.2px; line-height: 14px; }
.pressed { background: #316c9f; border-color: #29608f #68a0d2 #68a0d2 #29608f; padding: 1px 0 0 1px; }
.head { display: flex; justify-content: space-between; height: 18px; color: #2f4a4e; line-height: 18px; letter-spacing: -.25px; }
.head b { font-weight: 400; font-size: 16px; line-height: 23px; color: #4682b4; letter-spacing: -.3px; }
.row { display: flex; justify-content: space-between; height: 18px; line-height: 18px; }
.row em { font-style: normal; color: #2f4a4e; letter-spacing: -.4px; }
.row.neg em { color: #d0668c; }
.swap-btn { margin-top: 2px; }
.stack { display: flex; flex-direction: column; gap: 2px; margin-top: 2px; }
.symbols { left: 1780px; top: 294px; width: 80px; display: flex; flex-direction: column; gap: 4px; }
.symbols .btn { height: 16px; font-size: 10.6px; letter-spacing: -.4px; line-height: 12px; color: #f0f8ff; border-color: #6ba0cc #2e6696 #2e6696 #6ba0cc; }
.symbols .lined { border-top-color: #a5977a; }
.symbols .current { background: #f8fffd; color: #4682b4; border-color: #c4c8c8 #6a6e70 #6a6e70 #c4c8c8; }
.account { right: 69px; top: 728px; text-align: right; font-size: 11px; line-height: 16px; color: #686c70; letter-spacing: -.15px; white-space: nowrap; }
.account .drawdown { font-size: 12.5px; color: #1aa6e0; letter-spacing: -.35px; }
.account .leverage { padding-right: 3px; line-height: 17px; }
</style>
